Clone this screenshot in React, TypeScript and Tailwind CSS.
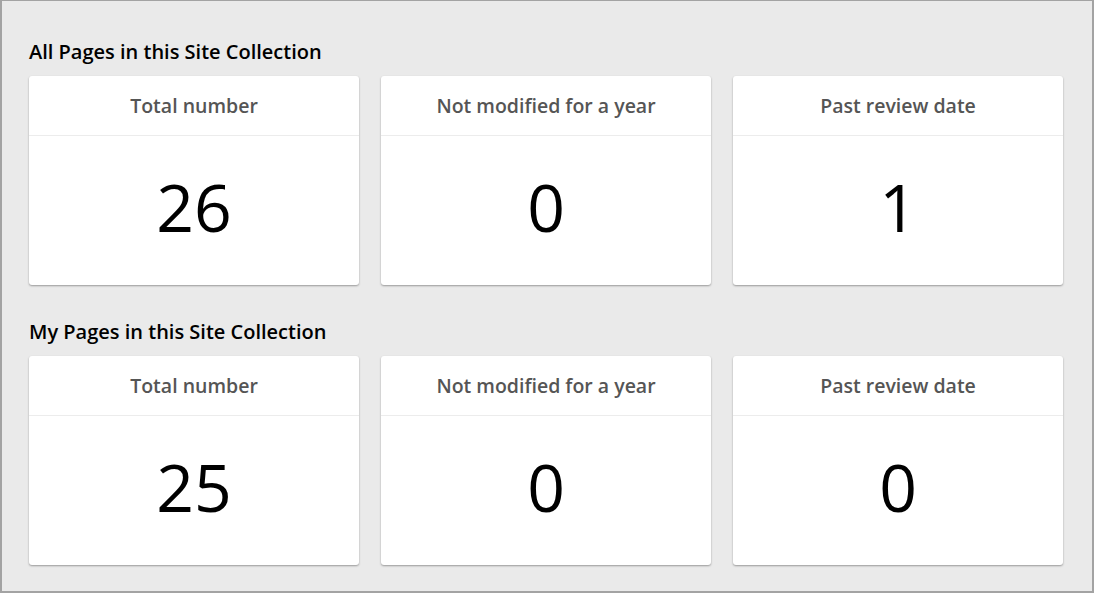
const sections = [
  {
    title: "All Pages in this Site Collection",
    stats: [
      { label: "Total number", value: "26" },
      { label: "Not modified for a year", value: "0" },
      { label: "Past review date", value: "1" },
    ],
  },
  {
    title: "My Pages in this Site Collection",
    stats: [
      { label: "Total number", value: "25" },
      { label: "Not modified for a year", value: "0" },
      { label: "Past review date", value: "0" },
    ],
  },
];

const StatCard = ({ label, value }: { label: string; value: string }) => {
  return (
    <div className="flex flex-col bg-white rounded-[3px] shadow-[0_1px_2px_rgba(0,0,0,0.35)] h-[209px]">
      <div className="h-[60px] flex items-center justify-center border-b border-[#ececec] text-[19.5px] font-semibold text-[#555]">
        {label}
      </div>
      <div className="flex-1 flex items-center justify-center text-[66px] text-black leading-none pb-[9px]">
        {value}
      </div>
    </div>
  );
};

const App = () => {
  return (
    <div
      className="w-[1094px] h-[593px] bg-[#eaeaea] border-t border-l-2 border-r-2 border-b-2 border-[#a3a3a3] px-[27px] pt-[39px] flex flex-col gap-[35px]"
      style={{ fontFamily: '"Open Sans", "Noto Sans", sans-serif' }}
    >
      {sections.map((section) => (
        <div key={section.title} className="flex flex-col">
          <h2 className="text-[20px] leading-[24px] font-semibold text-black mb-[12px]">
            {section.title}
          </h2>
          <div className="grid grid-cols-3 gap-x-[22px] w-[1034px]">
            {section.stats.map((stat) => (
              <StatCard key={stat.label} label={stat.label} value={stat.value} />
            ))}
          </div>
        </div>
      ))}
    </div>
  );
};

export default App;
